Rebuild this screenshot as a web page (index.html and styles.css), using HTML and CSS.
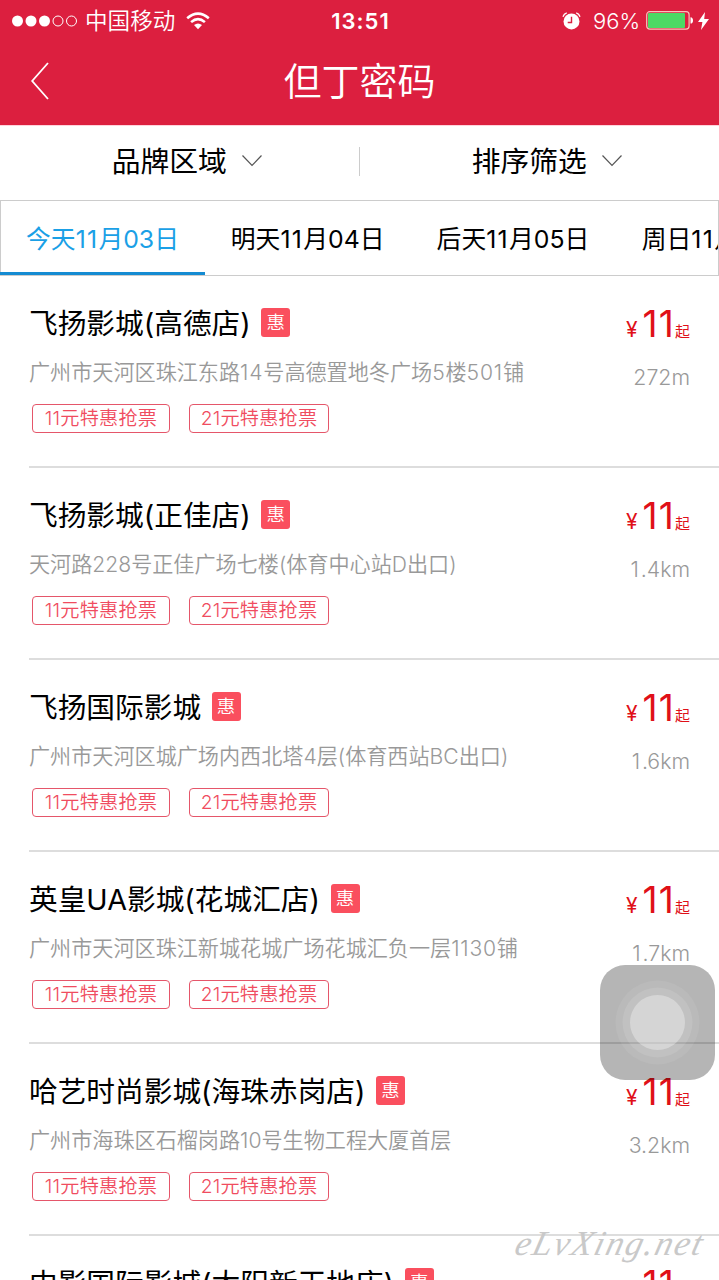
FILE: index.html
```html
<!DOCTYPE html>
<html lang="zh-CN">
<head>
<meta charset="utf-8">
<title>但丁密码</title>
<link rel="stylesheet" href="styles.css">
</head>
<body>
<div class="screen">
  <header class="header">
    <div class="status">
      <div class="status-left">
        <svg class="signal" width="66" height="12" viewBox="0 0 66 12"><g fill="#fff"><circle cx="5.5" cy="6" r="5.5"/><circle cx="19" cy="6" r="5.5"/><circle cx="32.5" cy="6" r="5.5"/></g><g fill="none" stroke="#fff" stroke-width="1"><circle cx="46" cy="6" r="5"/><circle cx="59.5" cy="6" r="5"/></g></svg>
        <span class="carrier">中国移动</span>
        <svg class="wifi" width="24" height="18" viewBox="0 0 24 18"><g fill="none" stroke="#fff" stroke-width="2.6"><path d="M1.2 6.2Q12-3 22.8 6.2"/><path d="M5.1 10.1Q12 4 18.9 10.1"/></g><path d="M8 13Q12 9.8 16 13L12 17.2Z" fill="#fff"/></svg>
      </div>
      <div class="clock">13:51</div>
      <div class="status-right">
        <svg class="alarm" width="19" height="18" viewBox="0 0 20 19"><circle cx="10" cy="10" r="8.4" fill="#fff"/><path d="M1 5Q2 2 5 1M15 1Q18 2 19 5" fill="none" stroke="#fff" stroke-width="1.4"/><path d="M10 5v6H6" fill="none" stroke="#dc1f3f" stroke-width="1.5"/></svg>
        <span class="percent">96%</span>
        <svg class="battery" width="48" height="19" viewBox="0 0 48 19"><rect x=".7" y=".7" width="42.4" height="17.4" rx="3" fill="none" stroke="#f7c3bd" stroke-width="1.2"/><rect x="2" y="2" width="37" height="15" rx="1" fill="#4cd964"/><path d="M44.5 6.2Q47 6.5 47 9.4T44.5 12.6Z" fill="#fff"/></svg>
        <svg class="bolt" width="11" height="18" viewBox="0 0 11 18"><path d="M7 0L0 10h4.4L3 18 11 7H6.2Z" fill="#fff"/></svg>
      </div>
    </div>
    <div class="nav">
      <svg class="back" width="20" height="38" viewBox="0 0 20 38"><path d="M18 1L2.2 19 18 37" fill="none" stroke="#fff" stroke-width="1.8"/></svg>
      <h1 class="nav-title">但丁密码</h1>
    </div>
  </header>
  <div class="filters">
    <div class="filter">品牌区域<svg class="chevron" width="22" height="14" viewBox="0 0 22 14"><path d="M1.5 1.5L11 11.5 20.5 1.5" fill="none" stroke="#555" stroke-width="1.2"/></svg></div>
    <div class="divider"></div>
    <div class="filter">排序筛选<svg class="chevron" width="22" height="14" viewBox="0 0 22 14"><path d="M1.5 1.5L11 11.5 20.5 1.5" fill="none" stroke="#555" stroke-width="1.2"/></svg></div>
  </div>
  <div class="dates">
    <div class="date active">今天<span class="month">11</span>月03日</div>
    <div class="date">明天<span class="month">11</span>月04日</div>
    <div class="date">后天<span class="month">11</span>月05日</div>
    <div class="date">周日<span class="month">11</span>月06日</div>
  </div>
  <main class="list">
    <section class="cinema">
      <div class="info"><div class="name">飞扬影城(高德店)<span class="badge">惠</span></div><div class="address">广州市天河区珠江东路<span class="num">14</span>号高德置地冬广场<span class="num">5</span>楼<span class="num">501</span>铺</div><div class="tags"><span class="tag">11元特惠抢票</span><span class="tag wide">21元特惠抢票</span></div></div>
      <div class="aside"><div class="price"><span class="yen">¥</span><span class="amount">11</span><span class="from">起</span></div><div class="distance">272m</div></div>
    </section>
    <section class="cinema">
      <div class="info"><div class="name">飞扬影城(正佳店)<span class="badge">惠</span></div><div class="address">天河路228号正佳广场七楼(体育中心站D出口)</div><div class="tags"><span class="tag">11元特惠抢票</span><span class="tag wide">21元特惠抢票</span></div></div>
      <div class="aside"><div class="price"><span class="yen">¥</span><span class="amount">11</span><span class="from">起</span></div><div class="distance"><span class="one">1</span>.4km</div></div>
    </section>
    <section class="cinema">
      <div class="info"><div class="name">飞扬国际影城<span class="badge">惠</span></div><div class="address">广州市天河区城广场内西北塔4层(体育西站BC出口)</div><div class="tags"><span class="tag">11元特惠抢票</span><span class="tag wide">21元特惠抢票</span></div></div>
      <div class="aside"><div class="price"><span class="yen">¥</span><span class="amount">11</span><span class="from">起</span></div><div class="distance"><span class="one">1</span>.6km</div></div>
    </section>
    <section class="cinema">
      <div class="info"><div class="name">英皇UA影城(花城汇店)<span class="badge">惠</span></div><div class="address">广州市天河区珠江新城花城广场花城汇负一层<span class="num">1130</span>铺</div><div class="tags"><span class="tag">11元特惠抢票</span><span class="tag wide">21元特惠抢票</span></div></div>
      <div class="aside"><div class="price"><span class="yen">¥</span><span class="amount">11</span><span class="from">起</span></div><div class="distance"><span class="one">1</span>.7km</div></div>
    </section>
    <section class="cinema">
      <div class="info"><div class="name">哈艺时尚影城(海珠赤岗店)<span class="badge">惠</span></div><div class="address">广州市海珠区石榴岗路10号生物工程大厦首层</div><div class="tags"><span class="tag">11元特惠抢票</span><span class="tag wide">21元特惠抢票</span></div></div>
      <div class="aside"><div class="price"><span class="yen">¥</span><span class="amount">11</span><span class="from">起</span></div><div class="distance">3.2km</div></div>
    </section>
    <section class="cinema">
      <div class="info"><div class="name">中影国际影城(太阳新天地店)<span class="badge">惠</span></div></div>
      <div class="aside"><div class="price"><span class="yen">¥</span><span class="amount">11</span><span class="from">起</span></div></div>
    </section>
  </main>
  <svg class="assistive" width="115" height="115" viewBox="0 0 115 115"><rect width="115" height="115" rx="25" fill="#000" fill-opacity=".29"/><circle cx="57.5" cy="57.5" r="42" fill="#fff" fill-opacity=".07"/><circle cx="57.5" cy="57.5" r="35" fill="#fff" fill-opacity=".1"/><circle cx="57.5" cy="57.5" r="27.5" fill="#fff" fill-opacity=".33"/></svg>
  <div class="watermark">eLvXing.net</div>
</div>
</body>
</html>
```

FILE: styles.css
```css
* { box-sizing: border-box; }
body { margin: 0; background: #fff; }
.screen {
  position: relative;
  width: 719px;
  height: 1280px;
  overflow: hidden;
  font-family: Inter, "Noto Sans CJK SC", sans-serif;
  font-weight: 350;
  color: #000;
  background: #fff;
}
.header { height: 125px; background: #dc1f3f; color: #fff; }
.status {
  display: grid;
  grid-template-columns: 1fr auto 1fr;
  align-items: center;
  height: 40px;
  padding: 0 10px 0 12px;
}
.status-left, .status-right { display: flex; align-items: center; }
.status-right { justify-content: flex-end; }
.carrier { margin-left: 7px; font-size: 22.6px; line-height: 41px; }
.wifi { margin-left: 11px; }
.clock { font-size: 22px; font-weight: 600; letter-spacing: 1px; line-height: 40px; }
.percent { margin-left: 12px; font-size: 22px; line-height: 40px; }
.battery { margin-left: 6px; }
.bolt { margin-left: 4px; }
.nav { display: flex; align-items: center; height: 82px; padding-left: 30px; }
.nav-title {
  flex: 1;
  margin: 0 50px 0 0;
  text-align: center;
  font-size: 38px;
  font-weight: 350;
  line-height: 84px;
}
.filters {
  display: flex;
  align-items: center;
  height: 75px;
  padding-bottom: 3px;
  border-top: 1px solid #ffd3dc;
}
.filter {
  display: flex;
  flex: 1;
  align-items: center;
  justify-content: center;
  padding-left: 16px;
  font-size: 28.8px;
  font-weight: 400;
  line-height: 70px;
}
.chevron { position: relative; top: -1px; margin-left: 14.5px; }
.divider { width: 1px; height: 29px; background: #ccc; }
.dates {
  display: flex;
  height: 76px;
  overflow: hidden;
  border: 1px solid #ccc;
  border-left: 0;
  box-shadow: inset 1px 0 #ccc;
}
.date {
  flex: 0 0 205.3px;
  height: 75px;
  text-align: center;
  white-space: nowrap;
  font-size: 24.8px;
  font-weight: 400;
  line-height: 76px;
}
.month { letter-spacing: 1.3px; }
.date.active { color: #1aa0e6; flex-basis: 205px; border-bottom: 4px solid #148bd2; }
.cinema {
  display: flex;
  justify-content: space-between;
  height: 192px;
  margin-left: 29px;
  padding: 25px 29px 0 0;
  border-bottom: 2px solid #ddd;
}
.name {
  display: flex;
  align-items: center;
  height: 44px;
  font-size: 28.7px;
  font-weight: 400;
  line-height: 47px;
  white-space: nowrap;
}
.badge {
  width: 29px;
  height: 29px;
  margin: 0 0 1px 10.5px;
  border-radius: 3px;
  background: #fa4f5e;
  color: #fff;
  font-size: 18.5px;
  font-weight: 350;
  line-height: 28px;
  text-align: center;
}
.address {
  height: 54px;
  color: #999;
  font-size: 21.12px;
  line-height: 55px;
  white-space: nowrap;
}
.num { letter-spacing: .8px; }
.tags { display: flex; gap: 19px; padding: 5px 0 0 3px; }
.tag {
  width: 138px;
  height: 29px;
  border: 1px solid #e5566a;
  border-radius: 4px;
  color: #f04c60;
  font-size: 19.2px;
  letter-spacing: .2px;
  line-height: 27px;
  text-align: center;
  white-space: nowrap;
}
.tag.wide { width: 140px; }
.aside { display: flex; flex-direction: column; align-items: flex-end; }
.price {
  display: flex;
  align-items: baseline;
  height: 44px;
  color: #e01018;
  line-height: 45px;
}
.yen { margin-right: 5px; font-size: 21px; font-weight: 400; }
.amount { font-size: 37px; font-weight: 400; letter-spacing: 1.2px; }
.from { font-size: 15px; font-weight: 400; }
.distance { color: #999; font-size: 21.3px; line-height: 64px; }
.one { letter-spacing: 1.8px; }
.assistive { position: absolute; left: 600px; top: 965px; }
.watermark {
  position: absolute;
  left: 516px;
  top: 1222px;
  color: #c9c9c9;
  font-family: "Liberation Serif", serif;
  font-size: 35px;
  font-style: italic;
  font-weight: 400;
  letter-spacing: 1.8px;
  line-height: 44px;
  transform: skewX(-14deg);
}
```
